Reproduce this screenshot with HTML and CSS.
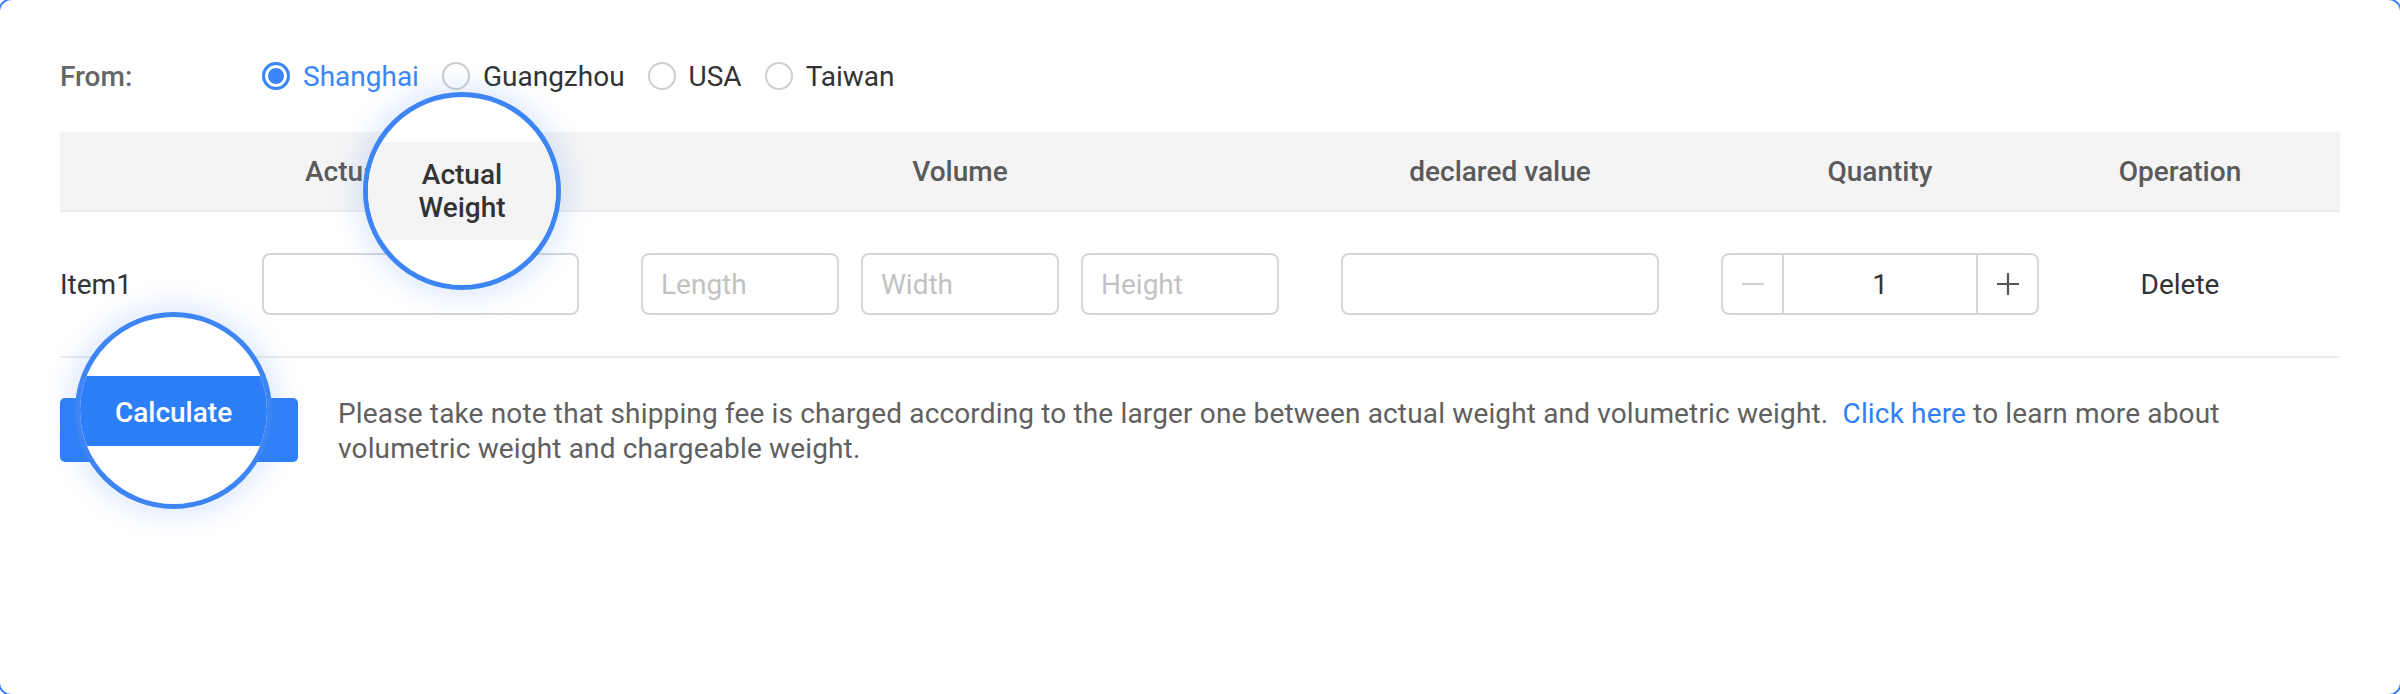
FILE: index.html
```html
<!DOCTYPE html>
<html lang="en">
<head>
<meta charset="utf-8">
<title>Shipping calculator</title>
<link rel="stylesheet" href="styles.css">
</head>
<body>
<div class="frame">
  <div class="from-row">
    <span class="label">From:</span>
    <div class="radios">
      <label class="radio checked"><span class="dot"></span><span>Shanghai</span></label>
      <label class="radio"><span class="dot"></span><span>Guangzhou</span></label>
      <label class="radio"><span class="dot"></span><span>USA</span></label>
      <label class="radio"><span class="dot"></span><span>Taiwan</span></label>
    </div>
  </div>

  <div class="grid head">
    <div></div>
    <div class="h-weight">Actual Weight</div>
    <div class="h-center">Volume</div>
    <div class="h-center">declared value</div>
    <div class="h-center">Quantity</div>
    <div class="h-center">Operation</div>
    <div></div>
  </div>

  <div class="grid row">
    <div class="item">Item1</div>
    <div><input class="field w-weight" type="text"></div>
    <div class="volume">
      <input class="field w-vol" type="text" placeholder="Length">
      <input class="field w-vol" type="text" placeholder="Width">
      <input class="field w-vol" type="text" placeholder="Height">
    </div>
    <div class="center"><input class="field w-declared" type="text"></div>
    <div class="center">
      <div class="stepper">
        <span class="step minus"><svg width="22" height="22" viewBox="0 0 22 22"><path d="M0 11H22" stroke="#d2d2d2" stroke-width="2.2"/></svg></span>
        <span class="value">1</span>
        <span class="step plus"><svg width="22" height="22" viewBox="0 0 22 22"><path d="M0 11H22M11 0V22" stroke="#555" stroke-width="2.2"/></svg></span>
      </div>
    </div>
    <div class="center op">Delete</div>
    <div></div>
  </div>

  <div class="bottom">
    <button class="calc">Calculate</button>
    <p class="note">Please take note that shipping fee is charged according to the larger one between actual weight and volumetric weight.&nbsp; <a href="#">Click here</a> to learn more about volumetric weight and chargeable weight.</p>
  </div>

  <div class="lens lens-weight"><div class="band band-gray">Actual<br>Weight</div></div>
  <div class="lens lens-calc"><div class="band band-blue">Calculate</div></div>

  <span class="corner tl"></span>
  <span class="corner tr"></span>
  <span class="corner bl"></span>
  <span class="corner br"></span>
</div>
</body>
</html>
```

FILE: styles.css
```css
* { box-sizing: border-box; }
html, body { margin: 0; padding: 0; background: #fff; }
body {
  font-family: Roboto, "Liberation Sans", sans-serif;
  font-size: 28px;
  color: #333;
}
.frame {
  position: relative;
  width: 2400px;
  height: 694px;
  overflow: hidden;
  padding: 56px 60px 0;
  background: #fff;
}
.corner {
  position: absolute;
  width: 24px;
  height: 24px;
  border: 0 solid #3d85f5;
}
.corner.tl { left: -2px; top: -2px; border-top-width: 2px; border-left-width: 2px; border-top-left-radius: 14px; }
.corner.tr { right: -2px; top: -2px; border-top-width: 2px; border-right-width: 2px; border-top-right-radius: 14px; }
.corner.bl { left: -2px; bottom: -2px; border-bottom-width: 2px; border-left-width: 2px; border-bottom-left-radius: 14px; }
.corner.br { right: -2px; bottom: -2px; border-bottom-width: 2px; border-right-width: 2px; border-bottom-right-radius: 14px; }
.from-row {
  display: flex;
  align-items: center;
  height: 40px;
}
.label {
  width: 202px;
  color: #666;
  font-weight: 500;
}
.radios { display: flex; align-items: center; gap: 23px; }
.radio { display: flex; align-items: center; gap: 13px; color: #333; }
.radio .dot {
  width: 28px; height: 28px;
  border-radius: 50%;
  border: 2px solid #cfcfcf;
  background: #fff;
}
.radio.checked { color: #3a86f8; }
.radio.checked .dot {
  border: 3px solid #3a86f8;
  box-shadow: inset 0 0 0 3px #fff, inset 0 0 0 20px #3a86f8;
}
.grid {
  display: grid;
  grid-template-columns: 202px 338px 720px 360px 400px 200px 1fr;
  align-items: center;
}
.head {
  margin-top: 36px;
  height: 80px;
  background: #f4f4f4;
  border-bottom: 2px solid #ebebeb;
  color: #5a5a5a;
  font-weight: 500;
}
.h-weight { padding-left: 43px; }
.h-center { text-align: center; }
.row {
  height: 146px;
  border-bottom: 2px solid #ebebeb;
}
.item { color: #333; }
.center { display: flex; justify-content: center; }
.op { color: #333; }
.field {
  height: 62px;
  border: 2px solid #d6d6d6;
  border-radius: 8px;
  font: inherit;
  padding: 0 18px;
  color: #333;
  background: #fff;
  outline: none;
}
.field::placeholder { color: #c2c2c2; }
.w-weight { width: 317px; display: block; }
.w-vol { width: 198px; }
.w-declared { width: 318px; }
.volume { display: flex; justify-content: center; gap: 22px; }
.stepper {
  display: flex;
  width: 318px;
  height: 62px;
  border: 2px solid #d6d6d6;
  border-radius: 8px;
}
.step {
  width: 61px;
  display: flex;
  align-items: center;
  justify-content: center;
}
.minus { border-right: 2px solid #d6d6d6; }
.plus { border-left: 2px solid #d6d6d6; }
.value {
  flex: 1;
  display: flex;
  align-items: center;
  justify-content: center;
  color: #333;
}
.bottom {
  display: flex;
  align-items: flex-start;
  gap: 40px;
  padding-top: 40px;
}
.calc {
  flex: none;
  width: 238px;
  height: 64px;
  border: none;
  border-radius: 5px;
  background: #2f80f8;
  color: #fff;
  font: inherit;
  font-weight: 500;
}
.note {
  margin: -2px 60px 0 0;
  flex: 1;
  line-height: 35px;
  letter-spacing: 0.15px;
  color: #606060;
}
.note a { color: #2f80f8; text-decoration: none; }
.lens {
  position: absolute;
  border: 5px solid #3d85f5;
  border-radius: 50%;
  background: #fff;
  overflow: hidden;
  display: flex;
  align-items: center;
  box-shadow: 0 0 26px 8px rgba(61, 133, 245, 0.16);
}
.lens-weight { left: 363px; top: 92px; width: 198px; height: 198px; }
.lens-calc { left: 75px; top: 312px; width: 197px; height: 197px; }
.band {
  width: 100%;
  display: flex;
  align-items: center;
  justify-content: center;
  text-align: center;
  font-weight: 500;
}
.band-gray { height: 98px; background: #f4f4f4; color: #333; line-height: 33px; }
.band-blue { height: 70px; padding-top: 3px; background: #2d7ff9; color: #fff; }
```
